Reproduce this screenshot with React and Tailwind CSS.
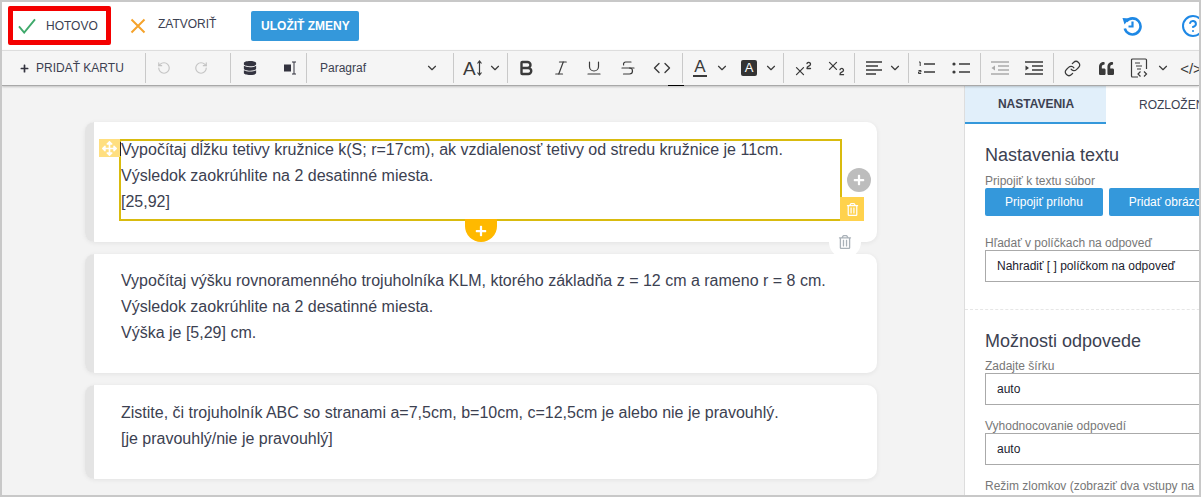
import { ChevronDown, RotateCcw, RotateCw, Bold, Italic, Underline, Strikethrough, Code, Superscript, Subscript, Link, CircleHelp } from 'lucide-react'
import { FaDatabase, FaArrowsAlt, FaRegTrashAlt, FaQuoteLeft, FaPlus } from 'react-icons/fa'

const Divider = () => <div className="w-px h-[30px] bg-[#c9c9c9] shrink-0" />

const Slot = ({ w, children }) => (
  <div className={`${w} h-full shrink-0 flex items-center justify-center text-[#3a3a3a]`}>{children}</div>
)

const Chev = ({ w = 'w-[10px]' }) => (
  <Slot w={w}><ChevronDown size={14} strokeWidth={2} className="shrink-0" /></Slot>
)

const Field = ({ label, value, mt }) => (
  <div className={mt}>
    <div className="text-[12px] leading-[14px] text-[#777777]">{label}</div>
    <div className="h-[32px] border border-[#aaaaaa] flex items-center pl-[11px] text-[12px] text-[#1c1c2e]">{value}</div>
  </div>
)

const Card = ({ children, className }) => (
  <div className={`relative flex rounded-[10px] bg-white shadow-[0_1px_5px_rgba(0,0,0,0.07)] ${className}`}>
    <div className="w-[9px] shrink-0 rounded-l-[10px] bg-[#e4e4e4]" />
    {children}
  </div>
)

export default function App() {
  return (
    <div className="relative w-[1201px] h-[497px] box-border overflow-hidden border-2 border-[#c8c8c8] bg-white font-['Liberation_Sans',Arial,sans-serif] text-[#3c4151]">
      {/* top bar */}
      <div className="h-[48px] flex items-center bg-white">
        <div className="ml-[6px] w-[103px] h-[39px] mt-[-1px] border-[5px] border-[#f40000] rounded-[2px] flex items-center pl-[5px] shrink-0">
          <svg width="18" height="16" viewBox="0 0 19 17" className="shrink-0">
            <path d="M1 9 L6.5 15.5 L18 1.5" fill="none" stroke="#3fa96b" strokeWidth="2" />
          </svg>
          <span className="ml-[10px] text-[12px] leading-none">HOTOVO</span>
        </div>
        <svg width="16" height="16" viewBox="0 0 16 16" className="ml-[19px] shrink-0">
          <path d="M1.5 1.5 L14.5 14.5 M14.5 1.5 L1.5 14.5" stroke="#f5a32c" strokeWidth="2" />
        </svg>
        <span className="ml-[12px] text-[12px] leading-none mt-[-4px]">ZATVORIŤ</span>
        <button className="ml-[35px] w-[108px] h-[30px] rounded-[2px] bg-[#3498db] text-white text-[12px] font-bold leading-none">ULOŽIŤ ZMENY</button>
        <div className="flex-1" />
        <svg width="20" height="20" viewBox="0 0 20 20" className="text-[#1e88e5] mr-[39px] shrink-0">
          <path d="M4.2 5.5A8 8 0 1 1 2.8 12.5" fill="none" stroke="currentColor" strokeWidth="2.6" />
          <path d="M0.5 2 L7.5 2.5 L2.5 8.5 Z" fill="currentColor" />
          <path d="M10.5 5.5V10.5H6.5" fill="none" stroke="currentColor" strokeWidth="2.2" />
        </svg>
        <CircleHelp size={24} strokeWidth={2} className="text-[#1e88e5] mr-[-6px] shrink-0" />
      </div>

      {/* toolbar */}
      <div className="relative h-[36px] flex items-center bg-[#f5f5f5] border-t border-[#dddddd] border-b border-b-[#a8a8a8] shadow-[0_1px_2px_rgba(0,0,0,0.2)] z-10">
        <div className="w-[143px] shrink-0 flex items-center pl-[18px] text-[12px] text-[#3c4151]">
          <FaPlus size={9} className="text-[#33333f] mr-[7px]" />
          PRIDAŤ KARTU
        </div>
        <Divider />
        <Slot w="w-[36px]"><RotateCcw size={14} className="text-[#c4c4c4]" /></Slot>
        <Slot w="w-[38px]"><RotateCw size={14} className="text-[#c4c4c4]" /></Slot>
        <div className="w-[10px] shrink-0" />
        <Divider />
        <Slot w="w-[37px]"><FaDatabase size={14} className="text-[#33333f]" /></Slot>
        <Slot w="w-[38px]">
          <svg width="14" height="14" viewBox="0 0 14 14" className="ml-[6px]">
            <rect x="1" y="3.5" width="7" height="7" fill="#33333f" />
            <path d="M9 1h4M11 1v12M9 13h4" stroke="#33333f" fill="none" strokeWidth="1" />
          </svg>
        </Slot>
        <Divider />
        <div className="w-[146px] h-full shrink-0 flex items-center pl-[13px] text-[12px] text-[#3c4151]">
          Paragraf
          <ChevronDown size={14} strokeWidth={2} className="ml-[59px] text-[#3a3a3a]" />
        </div>
        <Divider />
        <div className="w-[53px] h-full shrink-0 flex items-center text-[#3a3a3a]">
          <span className="ml-[9px] text-[19px] leading-none font-light">A</span>
          <svg width="7" height="16" viewBox="0 0 7 16" className="shrink-0">
            <path d="M3.5 1v14M1.5 3.5l2-2.5 2 2.5M1.5 12.5l2 2.5 2-2.5" fill="none" stroke="#3a3a3a" strokeWidth="1.2" />
          </svg>
          <ChevronDown size={14} strokeWidth={2} className="ml-[5px] shrink-0" />
        </div>
        <Divider />
        <Slot w="w-[36px]"><Bold size={18} strokeWidth={3.2} /></Slot>
        <Slot w="w-[33px]"><Italic size={18} strokeWidth={1.6} /></Slot>
        <Slot w="w-[34px]"><Underline size={18} strokeWidth={1.6} /></Slot>
        <Slot w="w-[34px]"><Strikethrough size={18} strokeWidth={1.6} /></Slot>
        <Slot w="w-[34px]"><Code size={18} strokeWidth={1.8} /></Slot>
        <div className="w-[3px] shrink-0" />
        <Divider />
        <Slot w="w-[34px]">
          <span className="text-[17px] leading-[16px] border-b-2 border-[#3a3a3a] px-[1px]">A</span>
        </Slot>
        <Chev />
        <div className="w-[5px] shrink-0" />
        <Slot w="w-[34px]">
          <span className="w-[16px] h-[16px] rounded-[2px] bg-[#333333] text-white text-[13px] leading-[16px] text-center">A</span>
        </Slot>
        <Chev w="w-[9px]" />
        <div className="w-[8px] shrink-0" />
        <Divider />
        <div className="w-[2px] shrink-0" />
        <Slot w="w-[34px]"><Superscript size={21} strokeWidth={1.5} /></Slot>
        <Slot w="w-[33px]"><Subscript size={21} strokeWidth={1.5} /></Slot>
        <div className="w-[1px] shrink-0" />
        <Divider />
        <div className="w-[2px] shrink-0" />
        <Slot w="w-[34px]">
          <svg width="17" height="14" viewBox="0 0 17 14">
            <path d="M0 1h16M0 5h12M0 9h16M0 13h10" stroke="#3a3a3a" strokeWidth="1.4" />
          </svg>
        </Slot>
        <Chev w="w-[8px]" />
        <div className="w-[9px] shrink-0" />
        <Divider />
        <Slot w="w-[34px]">
          <svg width="18" height="14" viewBox="0 0 18 14">
            <path d="M7 3h11M7 11h11" stroke="#3a3a3a" strokeWidth="1.5" />
            <path d="M2 1h1.2v4M1.5 9.5h2.5v1.4h-2.5v1.6h2.7" fill="none" stroke="#3a3a3a" strokeWidth="1" />
          </svg>
        </Slot>
        <div className="w-[1px] shrink-0" />
        <Slot w="w-[34px]">
          <svg width="18" height="14" viewBox="0 0 18 14">
            <circle cx="2" cy="3" r="1.6" fill="#3a3a3a" />
            <circle cx="2" cy="11" r="1.6" fill="#3a3a3a" />
            <path d="M7 3h11M7 11h11" stroke="#3a3a3a" strokeWidth="1.5" />
          </svg>
        </Slot>
        <div className="w-[2px] shrink-0" />
        <Divider />
        <div className="w-[2px] shrink-0" />
        <Slot w="w-[34px]">
          <svg width="18" height="14" viewBox="0 0 18 14">
            <path d="M0 1h18M7 5h11M7 9h11M0 13h18" stroke="#aaaaaa" strokeWidth="1.3" />
            <path d="M4 4.5v5L0.5 7z" fill="#aaaaaa" />
          </svg>
        </Slot>
        <Slot w="w-[34px]">
          <svg width="18" height="14" viewBox="0 0 18 14">
            <path d="M0 1h18M7 5h11M7 9h11M0 13h18" stroke="#3a3a3a" strokeWidth="1.3" />
            <path d="M0.5 4.5v5L4 7z" fill="#3a3a3a" />
          </svg>
        </Slot>
        <div className="w-[2px] shrink-0" />
        <Divider />
        <div className="w-[1px] shrink-0" />
        <Slot w="w-[34px]"><Link size={17} strokeWidth={1.7} /></Slot>
        <Slot w="w-[34px]"><FaQuoteLeft size={15} /></Slot>
        <Slot w="w-[32px]">
          <svg width="18" height="20" viewBox="0 0 18 20">
            <path d="M8 19H2.5a1 1 0 0 1-1-1V2a1 1 0 0 1 1-1h13a1 1 0 0 1 1 1v9" fill="none" stroke="#3a3a3a" strokeWidth="1.2" />
            <path d="M5 5h5M6 8h6M7 11h4" stroke="#3a3a3a" strokeWidth="1.1" />
            <path d="M10.5 13.5 8 16l2.5 2.5M14 13.5l2.5 2.5-2.5 2.5" fill="none" stroke="#3a3a3a" strokeWidth="1.2" />
          </svg>
        </Slot>
        <div className="w-[4px] shrink-0" />
        <Chev w="w-[8px]" />
        <div className="w-[7px] shrink-0" />
        <Slot w="w-[34px]"><span className="text-[15px] leading-none font-medium whitespace-nowrap">&lt;/&gt;</span></Slot>
        <div className="absolute left-[666px] bottom-[-1px] w-[16px] h-[1px] bg-black" />
      </div>

      <div className="flex h-[409px]">
        {/* cards */}
        <div className="w-[962px] shrink-0 bg-[#f3f3f3] pl-[83px] pt-[36px] flex flex-col gap-[12px]">
          <Card className="w-[792px] h-[120px]">
            <div className="ml-[25px] mt-[17px] w-[723px] h-[82px] border-2 border-[#d9bb0e] text-[16px] leading-[26px] relative">
              <div className="-mt-[4px]">
                <p>Vypočítaj dĺžku tetivy kružnice k(S; r=17cm), ak vzdialenosť tetivy od stredu kružnice je 11cm.</p>
                <p>Výsledok zaokrúhlite na 2 desatinné miesta.</p>
                <p>[25,92]</p>
              </div>
              <div className="absolute left-[-22px] top-[-2px] w-[21px] h-[18px] bg-[#ffdf80] flex items-center justify-center">
                <FaArrowsAlt size={15} className="text-white" />
              </div>
              <div className="absolute left-[-1px] top-[1px] w-px h-[14px] bg-[#222222]" />
              <div className="absolute right-[-24px] bottom-[-2px] w-[24px] h-[24px] bg-[#ffd24d] flex items-center justify-center">
                <FaRegTrashAlt size={13} className="text-white" />
              </div>
              <div className="absolute right-[-31px] top-[27px] w-[24px] h-[24px] rounded-full bg-[#bdbdbd] flex items-center justify-center">
                <FaPlus size={12} className="text-white" />
              </div>
              <div className="absolute left-[344px] bottom-[-23px] w-[32px] h-[23px] rounded-b-[16px] bg-[#ffb900] flex items-center justify-center">
                <FaPlus size={12} className="text-white" />
              </div>
            </div>
            <div className="absolute left-[744px] top-[104px] w-[32px] h-[32px] rounded-full bg-white flex items-center justify-center z-10">
              <FaRegTrashAlt size={14} className="text-[#a9b1b8]" />
            </div>
          </Card>
          <Card className="w-[792px] h-[119px]">
            <div className="ml-[27px] mt-[14px] text-[16px] leading-[26px]">
              <p>Vypočítaj výšku rovnoramenného trojuholníka KLM, ktorého základňa z = 12 cm a rameno r = 8 cm.</p>
              <p>Výsledok zaokrúhlite na 2 desatinné miesta.</p>
              <p>Výška je [5,29] cm.</p>
            </div>
          </Card>
          <Card className="w-[792px] h-[94px]">
            <div className="ml-[27px] mt-[15px] text-[16px] leading-[26px]">
              <p>Zistite, či trojuholník ABC so stranami a=7,5cm, b=10cm, c=12,5cm je alebo nie je pravouhlý.</p>
              <p>[je pravouhlý/nie je pravouhlý]</p>
            </div>
          </Card>
        </div>

        {/* side panel */}
        <div className="w-[300px] shrink-0 bg-white border-l border-[#dddddd]">
          <div className="flex h-[38px] text-[12px] items-stretch">
            <div className="w-[141px] pl-[1px] bg-[#e1effa] border-b-[2px] border-[#3498db] font-bold flex items-center justify-center">NASTAVENIA</div>
            <div className="pl-[33px] flex items-center whitespace-nowrap">ROZLOŽENIE</div>
          </div>
          <div className="pl-[20px] w-[260px]">
            <h2 className="mt-[20px] text-[18px] leading-[22px] font-normal">Nastavenia textu</h2>
            <div className="mt-[8px] text-[12px] leading-[14px] text-[#777777]">Pripojiť k textu súbor</div>
            <div className="flex gap-[6px]">
              <button className="w-[118px] h-[28px] shrink-0 rounded-[2px] bg-[#3498db] text-white text-[12px] font-medium">Pripojiť prílohu</button>
              <button className="w-[118px] h-[28px] shrink-0 rounded-[2px] bg-[#3498db] text-white text-[12px] font-medium">Pridať obrázok</button>
            </div>
            <Field mt="mt-[20px]" label="Hľadať v políčkach na odpoveď" value="Nahradiť [ ] políčkom na odpoveď" />
          </div>
          <div className="mt-[27px] border-t border-dashed border-[#e6e6e6] pl-[20px] w-[260px]">
            <h2 className="mt-[20px] text-[18px] leading-[22px] font-normal">Možnosti odpovede</h2>
            <Field mt="mt-[7px]" label="Zadajte šírku" value="auto" />
            <Field mt="mt-[14px]" label="Vyhodnocovanie odpovedí" value="auto" />
            <div className="mt-[13px] text-[12px] leading-[16px] text-[#777777]">Režim zlomkov (zobraziť dva vstupy na zlomok)</div>
          </div>
        </div>
      </div>
    </div>
  )
}
